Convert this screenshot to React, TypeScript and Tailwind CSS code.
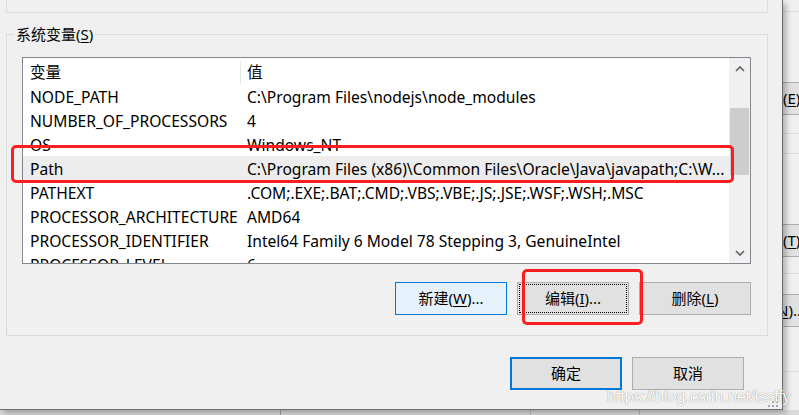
import React from "react";

const rows: [string, string][] = [
  ["NODE_PATH", "C:\\Program Files\\nodejs\\node_modules"],
  ["NUMBER_OF_PROCESSORS", "4"],
  ["OS", "Windows_NT"],
  ["Path", "C:\\Program Files (x86)\\Common Files\\Oracle\\Java\\javapath;C:\\W..."],
  ["PATHEXT", ".COM;.EXE;.BAT;.CMD;.VBS;.VBE;.JS;.JSE;.WSF;.WSH;.MSC"],
  ["PROCESSOR_ARCHITECTURE", "AMD64"],
  ["PROCESSOR_IDENTIFIER", "Intel64 Family 6 Model 78 Stepping 3, GenuineIntel"],
  ["PROCESSOR_LEVEL", "6"],
];

const Chevron = ({ down }: { down?: boolean }) => (
  <svg width="10" height="6" viewBox="0 0 10 6" className="text-[#606060]">
    <path
      d={down ? "M1 1 L5 5 L9 1" : "M1 5 L5 1 L9 5"}
      fill="none"
      stroke="currentColor"
      strokeWidth="1.6"
    />
  </svg>
);

// one button of the dialog, with the access key underlined
const WinButton = ({
  label,
  hotkey,
  tail = "",
  variant = "plain",
}: {
  label: string;
  hotkey?: string;
  tail?: string;
  variant?: "plain" | "hover" | "focus" | "default";
}) => {
  const look = {
    plain: "border border-[#adadad] bg-[#e1e1e1]",
    hover: "border border-[#0078d7] bg-[#e5f1fb]",
    focus:
      "border border-[#adadad] bg-[#e1e1e1] outline-1 outline-dotted outline-black outline-offset-[-3px]",
    default: "border-2 border-[#0078d7] bg-[#e1e1e1]",
  }[variant];
  return (
    <button
      className={`w-[112px] h-[33px] flex items-center justify-center text-[15px] text-black ${look}`}
    >
      {label}
      {hotkey && (
        <>
          (<span className="underline underline-offset-2">{hotkey}</span>)
        </>
      )}
      {tail}
    </button>
  );
};

const App = () => {
  return (
    <div className="relative w-[799px] h-[415px] overflow-hidden bg-[#d6d6d6] font-['Noto_Sans','Noto_Sans_CJK_SC',sans-serif] text-black">
      <div className="flex h-[410px]">
        {/* Environment variables dialog */}
        <div className="relative z-10 w-[783px] shrink-0 bg-[#f0f0f0] border-r border-b border-[#6e6e6e] shadow-[3px_3px_6px_rgba(0,0,0,0.28)]">
          <div className="ml-[6px] w-[762px] h-[13px] border-x border-b border-[#dcdcdc]" />

          <fieldset className="mt-[11px] ml-[6px] w-[762px] h-[312px] border border-[#dcdcdc]">
            <legend className="ml-[7px] px-[2px] text-[15px] leading-[20px]">
              系统变量(<span className="underline underline-offset-2">S</span>)
            </legend>

            <div className="mt-[13px] ml-[15px] w-[729px] h-[207px] border border-[#828790] bg-white flex">
              <div className="flex-1 overflow-hidden text-[15.6px]">
                <div className="flex h-[26px] items-center pt-[3px]">
                  <div className="w-[218px] pl-[7px] h-full flex items-center border-r border-[#e5e5e5]">
                    变量
                  </div>
                  <div className="pl-[6px]">值</div>
                </div>
                {rows.map(([name, value]) => (
                  <div
                    key={name}
                    className={`flex h-[24px] items-center pt-[3px] whitespace-nowrap ${
                      name === "Path" ? "bg-[#ededed]" : ""
                    }`}
                  >
                    <div className="w-[218px] pl-[7px]">{name}</div>
                    <div className="pl-[6px] overflow-hidden">{value}</div>
                  </div>
                ))}
              </div>

              {/* scrollbar */}
              <div className="w-[21px] bg-[#f0f0f0] flex flex-col">
                <div className="h-[21px] flex items-center justify-center">
                  <Chevron />
                </div>
                <div className="flex-1">
                  <div className="mt-[29px] ml-[1px] w-[19px] h-[67px] bg-[#cdcdcd]" />
                </div>
                <div className="h-[21px] flex items-center justify-center">
                  <Chevron down />
                </div>
              </div>
            </div>

            <div className="mt-[18px] pr-[16px] flex justify-end gap-[10px]">
              <WinButton label="新建" hotkey="W" tail="..." variant="hover" />
              <WinButton label="编辑" hotkey="I" tail="..." variant="focus" />
              <WinButton label="删除" hotkey="L" />
            </div>
          </fieldset>

          <div className="mt-[21px] pr-[38px] flex justify-end gap-[10px]">
            <WinButton label="确定" variant="default" />
            <WinButton label="取消" />
          </div>

          {/* size grip */}
          <svg
            width="12"
            height="10"
            viewBox="0 0 12 10"
            className="absolute right-[3px] bottom-[2px]"
          >
            <g fill="#a8a8a8">
              <rect x="9" y="0" width="2" height="2" />
              <rect x="5" y="4" width="2" height="2" />
              <rect x="9" y="4" width="2" height="2" />
              <rect x="1" y="8" width="2" height="2" />
              <rect x="5" y="8" width="2" height="2" />
              <rect x="9" y="8" width="2" height="2" />
            </g>
          </svg>
        </div>

        {/* window behind the dialog */}
        <div className="flex-1 bg-[#f0f0f0] text-[15px] whitespace-nowrap overflow-hidden">
          <div className="h-[12px] border-b border-[#dcdcdc]" />
          <div className="mt-[70px] h-[33px] bg-[#e1e1e1] border-y border-[#adadad] leading-[31px]">
            (<span className="underline underline-offset-2">E</span>)
          </div>
          <div className="mt-[18px] h-[1px] bg-[#dcdcdc]" />
          <div className="mt-[19px] h-[1px] bg-[#dcdcdc]" />
          <div className="mt-[70px] h-[33px] bg-[#e1e1e1] border-y border-[#adadad] leading-[31px]">
            (<span className="underline underline-offset-2">T</span>)
          </div>
          <div className="mt-[16px] h-[1px] bg-[#dcdcdc]" />
          <div className="mt-[20px] h-[33px] bg-[#e1e1e1] border-y border-[#adadad] leading-[31px] -ml-[6px]">
            <span className="underline underline-offset-2">N</span>)...
          </div>
          <div className="mt-[44px] h-[1px] bg-[#dcdcdc]" />
        </div>
      </div>

      <div className="flex h-[5px] bg-[#dadada]">
        <div className="w-[281px] border-r border-[#a0a0a0]" />
        <div className="w-[250px] border-r border-[#b8b8b8]" />
        <div className="w-[109px] border-r border-[#b8b8b8]" />
      </div>

      {/* red marks drawn on the screenshot */}
      <div className="absolute z-20 left-[11px] top-[145px] w-[723px] h-[38px] border-[3px] border-[#fa1e1e] rounded-[5px]" />
      <div className="absolute z-20 left-[522px] top-[269px] w-[121px] h-[56px] border-[3px] border-[#fa1e1e] rounded-[5px]" />

      {/* watermark */}
      <div className="absolute z-20 left-[607px] top-[385px] text-[16px] font-['Liberation_Sans',sans-serif] text-white [text-shadow:0_0_1px_rgba(0,0,0,0.55)]">
        https://blog.csdn.net/lssffy
      </div>
    </div>
  );
};

export default App;
